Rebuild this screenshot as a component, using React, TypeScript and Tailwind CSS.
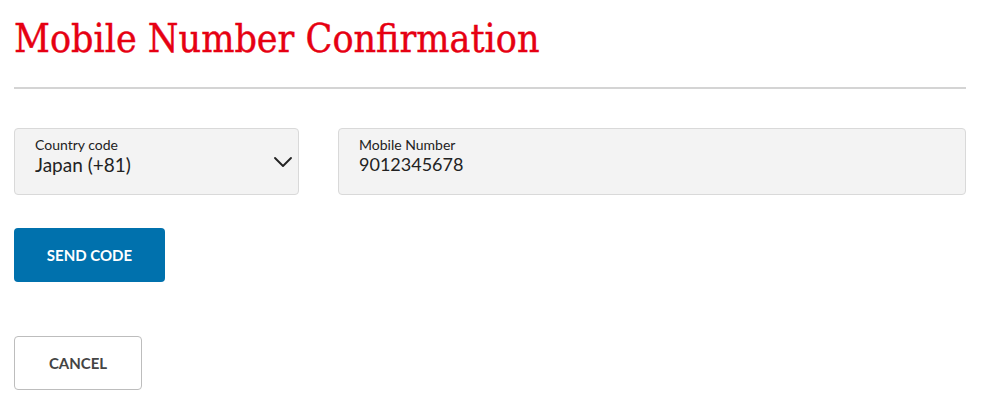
import { ChevronDown } from 'lucide-react';

export default function App() {
  return (
    <div className="w-[1000px] h-[414px] bg-white px-[14px] pt-[15px] font-['Lato',sans-serif]">
      <h1 className="font-['DejaVu_Serif_Condensed',serif] text-[39px] leading-[48px] text-[#e60012] [-webkit-text-stroke:0.4px_#e60012]">
        Mobile Number Confirmation
      </h1>
      <div className="mt-[24px] w-[952px] border-t-2 border-[#d4d4d4]" />

      <div className="mt-[39px] flex gap-[39px] w-[952px]">
        <div className="w-[285px] h-[67px] rounded-[4px] border border-[#d9d9d9] bg-[#f3f3f3] pl-[20px] pt-[8px] flex items-start justify-between">
          <div className="flex flex-col">
            <span className="text-[14px] leading-[16px] text-[#222]">Country code</span>
            <span className="text-[19px] leading-[23px] text-[#222]">Japan (+81)</span>
          </div>
          <ChevronDown className="mt-[9px] mr-[-1px] h-[32px] w-[32px] text-[#222]" strokeWidth={1.4} />
        </div>
        <div className="flex-1 h-[67px] rounded-[4px] border border-[#d9d9d9] bg-[#f3f3f3] pl-[20px] pt-[8px] flex flex-col">
          <span className="text-[14px] leading-[16px] text-[#222]">Mobile Number</span>
          <span className="text-[18px] leading-[23px] text-[#222]">9012345678</span>
        </div>
      </div>

      <button className="mt-[33px] block w-[151px] h-[54px] rounded-[4px] bg-[#0071ad] text-white text-[15px] font-bold">
        SEND CODE
      </button>
      <button className="mt-[54px] block w-[128px] h-[54px] rounded-[4px] border border-[#bdbdbd] bg-white text-[#444] text-[15px] font-bold">
        CANCEL
      </button>
    </div>
  );
}
